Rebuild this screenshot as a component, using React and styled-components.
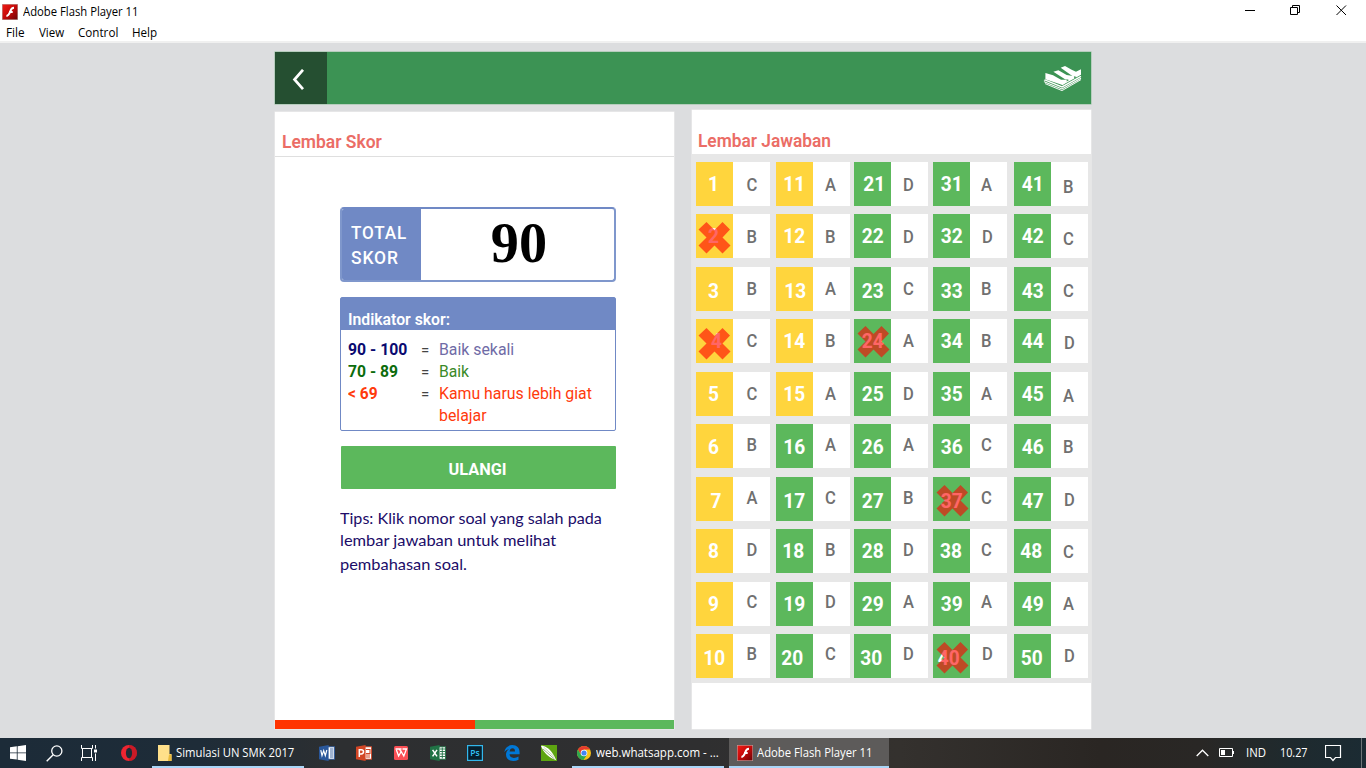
import React from "react";
import styled, { createGlobalStyle } from "styled-components";

const ui = `"Open Sans", "Noto Sans", sans-serif`;
const roboto = `Roboto, "Liberation Sans", sans-serif`;

const Global = createGlobalStyle`
  *, *::before, *::after { box-sizing: border-box; }
  body { margin: 0; overflow: hidden; }
  svg { display: block; flex: none; }
`;

const Desktop = styled.div`
  width: 1366px;
  height: 768px;
  display: flex;
  flex-direction: column;
  background: #dcdddf;
`;

const Squeeze = styled.span`
  display: inline-block;
  white-space: pre;
  transform: scaleX(${(p) => p.$x || 1});
  transform-origin: ${(p) => p.$origin || "left"} center;
`;

/* Window chrome */
const WindowTop = styled.header`
  height: 43px;
  background: #fff;
  border-bottom: 2px solid #f0f0f0;
  font: 12px ${ui};
  color: #000;
`;
const TitleBar = styled.div`
  height: 23px;
  display: flex;
  align-items: center;
  padding-left: 2px;
`;
const TitleText = styled.div`
  flex: 1;
  padding-left: 5px;
  line-height: 23px;
`;
const Controls = styled.div`
  display: flex;
  align-self: flex-start;
  padding: 5px 19px 0 0;
  gap: 35px;
`;
const MenuBar = styled.nav`
  height: 18px;
  display: flex;
  padding-left: 6px;
  line-height: 19px;
`;
const MenuItem = styled.span`
  width: ${(p) => p.$w}px;
`;

/* Stage */
const Stage = styled.main`
  width: 816px;
  height: 695px;
  margin-left: 275px;
  padding-top: 9px;
  font-family: ${roboto};
`;
const AppBar = styled.div`
  height: 52px;
  display: flex;
  justify-content: space-between;
  background: #3c9354;
  box-shadow: 0 0 0 0.5px #8fbd9b;
`;
const Back = styled.div`
  width: 52px;
  display: flex;
  padding: 17px 0 0 17px;
  background: #254f31;
`;
const Books = styled.div`
  padding: 13px 9px 0 0;
`;
const Panels = styled.div`
  display: flex;
  justify-content: space-between;
  padding-top: 6px;
`;
const Panel = styled.section`
  width: 399px;
  height: ${(p) => p.$h}px;
  margin-top: ${(p) => p.$top}px;
  display: flex;
  flex-direction: column;
  background: #fff;
  box-shadow: 0 0 0 0.5px #efefef;
`;
const PanelTitle = styled.h2`
  margin: 0;
  height: ${(p) => p.$h}px;
  padding: ${(p) => p.$pt}px 0 0 ${(p) => p.$pl}px;
  border-bottom: 1px solid ${(p) => p.$line};
  font: 600 18px/22px ${roboto};
  color: #eb6d66;
`;
const ScoreBody = styled.div`
  flex: 1;
  padding: 50px 58px 0 65px;
`;
const TotalBox = styled.div`
  height: 75px;
  display: flex;
  border: 2px solid #7f97cc;
  border-top-color: #7089c5;
  border-radius: 4px;
  overflow: hidden;
`;
const TotalLabel = styled.div`
  width: 79px;
  padding: 11px 0 0 8.5px;
  background: #7089c5;
  color: #fff;
  font: 500 18px/25px ${roboto};
  letter-spacing: 0.9px;
`;
const TotalValue = styled.div`
  flex: 1;
  padding-left: 3px;
  text-align: center;
  font: bold 58px/67px "Liberation Serif", serif;
  color: #000;
`;
const Indicator = styled.div`
  height: 134px;
  margin-top: 15px;
  border: 1.5px solid #7089c5;
  border-radius: 2px;
`;
const IndicatorHead = styled.div`
  height: 32px;
  padding: 11px 0 0 7px;
  background: #7089c5;
  color: #fff;
  font: 600 16px/22px ${roboto};
`;
const Legend = styled.div`
  display: grid;
  grid-template-columns: 73px 17.5px auto;
  padding: 9px 0 0 7px;
  font: 16px/22px ${roboto};
`;
const Range = styled.span`
  font-weight: 700;
  color: ${(p) => p.$c};
`;
const Equals = styled.span`
  color: #444;
  font-size: 15px;
`;
const Meaning = styled.span`
  color: ${(p) => p.$c};
`;
const Retry = styled.div`
  height: 43px;
  margin: 15px 0 0 1px;
  padding-right: 3px;
  border-radius: 1px;
  background: #5cb85c;
  color: #fff;
  text-align: center;
  font: 700 16px/47px ${roboto};
`;
const Tips = styled.p`
  margin: 18px 0 0;
  font: 16px/22px Lato, sans-serif;
  color: #200c68;
`;
const TipLine = styled.span`
  display: block;
  height: ${(p) => p.$h}px;
`;
const Progress = styled.div`
  height: 9px;
  display: flex;
  background: #5cb85c;
`;
const ProgressRed = styled.div`
  width: 200px;
  background: #ff3300;
`;

/* Answer sheet */
const Sheet = styled.div`
  height: 529px;
  display: grid;
  grid-template-columns: 80px 78px 79px 81px 74px;
  align-content: start;
  padding: 7.9px 0 0 4px;
  background: #e7e7e7;
`;
const Column = styled.div`
  width: 74px;
  display: flex;
  flex-direction: column;
  gap: 8.5px;
`;
const Entry = styled.div`
  height: 44px;
  display: flex;
  background: #fff;
`;
const NumberTile = styled.div`
  position: relative;
  width: 37px;
  height: 44px;
  background: ${(p) => (p.$yellow ? "#ffd53d" : "#5cb85c")};
  color: #fff;
  text-align: center;
  font: 700 19.5px/44px ${roboto};
`;
const Answer = styled.div`
  width: 37px;
  color: #707070;
  text-align: center;
  font: 500 18px/44px ${roboto};
`;
const Nudge = styled.span`
  display: inline-block;
  transform: translate(${(p) => p.$dx}px, ${(p) => p.$dy}px) scaleX(${(p) => p.$sx});
`;
const Cross = styled.svg`
  position: absolute;
  left: ${(p) => p.$left}px;
  top: ${(p) => p.$top}px;
`;

/* Taskbar */
const Taskbar = styled.footer`
  height: 30px;
  display: flex;
  background: linear-gradient(90deg, #1c2b38 0, #1e2c38 200px, #2d2f31 340px, #2f2f30 700px, #34312e 900px, #2a2623 1100px, #292725 1200px, #1f2a2e 1290px, #1b2b33 1366px);
  color: #fff;
  font: 12px ${ui};
`;
const Slot = styled.div`
  width: ${(p) => p.$w}px;
  height: 30px;
  padding-right: ${(p) => p.$pr || 0}px;
  display: flex;
  align-items: center;
  justify-content: center;
`;
const Task = styled.div`
  width: ${(p) => p.$w}px;
  height: 30px;
  margin-right: ${(p) => p.$mr || 0}px;
  padding: 1px 0 0 ${(p) => p.$pl}px;
  display: flex;
  align-items: center;
  gap: ${(p) => p.$gap}px;
  background: ${(p) => (p.$active ? "#5d5b5a" : "transparent")};
  border-bottom: 2px solid #a9d6f8;
  line-height: 27px;
`;
const Tray = styled.div`
  flex: 1;
  display: flex;
  align-items: center;
  justify-content: flex-end;
  padding-right: 4px;
`;
const TrayItem = styled.div`
  width: ${(p) => p.$w}px;
  line-height: 28px;
`;
const ShowDesktop = styled.div`
  width: 1px;
  height: 30px;
  background: #6d7578;
`;

const FlashIcon = ({ size }) => (
  <svg width={size} height={size} viewBox="0 0 16 16">
    <defs>
      <linearGradient id="flash" x1="0" y1="0" x2="1" y2="1">
        <stop offset="0" stopColor="#f01a14" />
        <stop offset=".5" stopColor="#c40a0a" />
        <stop offset="1" stopColor="#6d0204" />
      </linearGradient>
    </defs>
    <rect width="16" height="16" fill="#b9a3a0" />
    <rect x=".6" y=".6" width="14.8" height="14.8" fill="url(#flash)" />
    <path d="M12 3.800C9.200 3.800 8.700 6 8 8 7.200 10.300 6.500 11.800 4.400 11.900M7 8h3.700" fill="none" stroke="#fff" strokeWidth="2" />
  </svg>
);

const BooksIcon = () => (
  <svg width="39.4" height="27.6" viewBox="70 195 118 83">
    <g fill="#fff">
      <path d="M123 203 136 198 156 209 169 215 184 208 184 222 168 231 158 228Z" />
      <path d="M101 215 116 211 141 225 160 228 165 233 148 241 136 238Z" />
      <path d="M77 219 100 226 124 239 140 239 143 245 128 255 77 238Z" />
      <path d="M140 240 184 216 184 224 127 256 126 250Z" />
    </g>
    <g fill="none" stroke="#fff" strokeWidth="4">
      <path d="M74 239 74 247" strokeWidth="2" />
      <path d="M75 240 127 261 184 229" />
      <path d="M75 246 127 267 184 235" strokeWidth="3.400" />
      <path d="M76 251 127 272 184 239" strokeWidth="2.800" />
    </g>
    <path d="M141 238l7 2-7 5zM163 229l8 2-7 5z" fill="#3c9354" />
  </svg>
);

const TileIcon = ({ color, page, children }) => (
  <svg width="16" height="16" viewBox="0 0 16 16">
    {page && <rect x="8" y="1.800" width="7.500" height="12.400" fill="#fff" stroke={color} strokeWidth=".9" />}
    {children}
  </svg>
);

const WordIcon = () => (
  <TileIcon color="#2a579a" page>
    <path d="M11 4h3.500M11 6h3.500M11 8h3.500M11 10h3.500M11 12h3.500" stroke="#2a579a" strokeWidth=".9" />
    <path d="M0 1.800 9.600 0v16L0 14.200z" fill="#2a579a" />
    <path d="M1.800 5.200 3 10.600 4.700 5.600 6.300 10.600 7.800 5" fill="none" stroke="#fff" strokeWidth="1.200" />
  </TileIcon>
);
const PowerPointIcon = () => (
  <TileIcon color="#d24625" page>
    <path d="M10 4.500h4v4h-4M10 10h4M10 12h4" fill="none" stroke="#d24625" strokeWidth="1.100" />
    <path d="M0 1.800 9.600 0v16L0 14.200z" fill="#d24625" />
    <path d="M3.300 12V4.700h2q2.200 0 2.200 2T5.200 8.900H3.400" fill="none" stroke="#fff" strokeWidth="1.500" />
  </TileIcon>
);
const WpsIcon = () => (
  <svg width="14" height="14" viewBox="0 0 14 14">
    <rect width="14" height="14" rx="1.500" fill="#f94f55" />
    <path d="M1.500 3h6M8.500 3h4L9.800 10 7.200 5.500 4.600 10 2.400 4M5.500 3.500 7.400 6.200" fill="none" stroke="#fff" strokeWidth="1.300" />
  </svg>
);
const ExcelIcon = () => (
  <TileIcon color="#207245" page>
    <path d="M10 4h5M10 6.500h5M10 9h5M10 11.500h5M12.300 2.500v11" stroke="#207245" strokeWidth=".9" />
    <path d="M0 1.800 9.600 0v16L0 14.200z" fill="#207245" />
    <path d="M2.600 4.800 7 11.400M7 4.800 2.600 11.400" stroke="#fff" strokeWidth="1.500" />
  </TileIcon>
);
const PhotoshopIcon = () => (
  <svg width="16" height="16" viewBox="0 0 16 16">
    <rect x=".6" y=".6" width="14.800" height="14.800" fill="#071e2c" stroke="#32b7ec" strokeWidth="1.200" />
    <text x="3.200" y="11.300" fontSize="8.500" fontWeight="600" fontFamily="Open Sans, sans-serif" fill="#32c3f8">Ps</text>
  </svg>
);
const EdgeIcon = () => (
  <svg width="16" height="16" viewBox="0 0 16 16">
    <path d="M.3 7.2C1 2.7 4 .1 8.3.1c4.600 0 7.300 3 7.300 7.300v1.900H5.500c.1 2.300 1.800 3.600 4.400 3.600 1.700 0 3.200-.5 4.600-1.300v3.200c-1.500.8-3.300 1.200-5.300 1.200-4.500 0-7.200-2.500-7.200-6.400 0-2.500 1.200-4.500 3.300-5.700C3.500 4.300 1.600 5.400.3 7.200zM5.600 6.400h5.400c0-2-.8-3.100-2.500-3.100-1.600 0-2.600 1.200-2.900 3.100z" fill="#0078d7" />
  </svg>
);
const CorelIcon = () => (
  <svg width="16" height="16" viewBox="0 0 16 16">
    <rect width="16" height="16" fill="#5da511" />
    <path d="M0 1C1 .6 2.500 .8 4 1.500 8.500 3.500 13 9 15.200 15.200 9 13 3.500 8.500 1.500 4 .8 2.600 .4 1.600 0 1z" fill="#fff" />
    <path d="M2.500 2 13.500 12" stroke="#a4cb7c" strokeWidth=".6" />
    <path d="M2 4 13.500 14" stroke="#6d8f50" strokeWidth=".7" />
  </svg>
);
const ChromeIcon = () => (
  <svg width="14" height="14" viewBox="0 0 14 14">
    <circle cx="7" cy="7" r="7" fill="#fbc116" />
    <path d="M.94 3.500A7 7 0 0 1 13.060 3.500H7L4 8.700z" fill="#e53b2e" />
    <path d="M.94 3.500A7 7 0 0 0 6.500 14L10 8.700H4z" fill="#2da94f" />
    <circle cx="7" cy="7" r="3.300" fill="#fff" />
    <circle cx="7" cy="7" r="2.600" fill="#4486f5" />
  </svg>
);

const ANSWERS = ["CBBCCBADCB", "ABABAACBDC", "DDCADABDAD", "ADBBACCCAD", "BCCDABDCAD"];
const WRONG = {
  2: { left: 1.5, top: 6.7 },
  4: { left: 1.5, top: 7.7 },
  24: { left: 2.5, top: 5.3 },
  37: { left: 3, top: 7.2 },
  40: { left: 3, top: 6.4 },
};
const ROW_DY = [1, 0.5, 2.5, 1.4, 1.4, 2, 3, 1, 1, 3];
const COLUMN_DX = [-1, 0, 0.5, 0.5, 0.5];
const NUMBER_DX = { 4: 3, 7: 2.5, 10: 1, 11: 0, 13: 1, 18: -1, 20: -2, 21: 1.5, 30: -1.5, 38: -0.8, 40: -3, 48: -1.5, 50: -1 };
const LETTER_DX = [0, -1.5, -1.5, -2.5, -1.5];

const AnswerColumn = ({ col }) => (
  <Column>
    {ANSWERS[col].split("").map((letter, row) => {
      const n = col * 10 + row + 1;
      const dLetter = letter === "D" && col > 2 ? 1 : 0;
      return (
        <Entry key={n}>
          <NumberTile $yellow={n <= 15}>
            <Nudge $dx={COLUMN_DX[col] + (NUMBER_DX[n] || 0)} $dy={ROW_DY[row]} $sx={0.98}>{n}</Nudge>
            {WRONG[n] && (
              <Cross $left={WRONG[n].left} $top={WRONG[n].top} width="33" height="33" viewBox="0 0 33 33">
                <path d="M8.500 1 16.500 9 24.500 1 32 8.500 24.500 16.500 32.500 24.500 24.500 32.500 16.500 24.500 8.500 32.500 .5 24.500 8.500 16.500 .5 8.500z" fill="rgba(255,0,0,.6)" />
              </Cross>
            )}
          </NumberTile>
          <Answer>
            <Nudge $dx={LETTER_DX[col] + dLetter} $dy={(col === 4 ? 3 : 1) - row * 0.35} $sx={0.92}>{letter}</Nudge>
          </Answer>
        </Entry>
      );
    })}
  </Column>
);

export default function App() {
  return (
    <Desktop>
      <Global />
      <WindowTop>
        <TitleBar>
          <FlashIcon size={16} />
          <TitleText><Squeeze $x={0.94}>Adobe Flash Player 11</Squeeze></TitleText>
          <Controls>
            <svg width="11" height="11"><path d="M1 5.500h10" stroke="#000" /></svg>
            <svg width="11" height="11"><path d="M.5 2.500h7v7h-7zM2.500 2.500v-2h7v7h-2" fill="none" stroke="#000" /></svg>
            <svg width="11" height="11"><path d="M.5.5l9.500 9.500M10 .5.5 10" stroke="#000" /></svg>
          </Controls>
        </TitleBar>
        <MenuBar>
          <MenuItem $w={33}><Squeeze $x={0.98}>File</Squeeze></MenuItem>
          <MenuItem $w={39}><Squeeze $x={0.96}>View</Squeeze></MenuItem>
          <MenuItem $w={54}><Squeeze $x={0.97}>Control</Squeeze></MenuItem>
          <MenuItem $w={40}><Squeeze $x={0.97}>Help</Squeeze></MenuItem>
        </MenuBar>
      </WindowTop>

      <Stage>
        <AppBar>
          <Back>
            <svg width="13" height="22" viewBox="0 0 13 22"><path d="M11 .8 2.500 10.500 11 20.200" fill="none" stroke="#fff" strokeWidth="2.700" /></svg>
          </Back>
          <Books><BooksIcon /></Books>
        </AppBar>

        <Panels>
          <Panel $h={617} $top={2}>
            <PanelTitle $h={45} $pt={19} $pl={7} $line="#dfdfdf"><Squeeze $x={0.97}>Lembar Skor</Squeeze></PanelTitle>
            <ScoreBody>
              <TotalBox>
                <TotalLabel>
                  <Squeeze $x={0.95}>TOTAL</Squeeze>
                  <br />
                  <Squeeze $x={0.97}>SKOR</Squeeze>
                </TotalLabel>
                <TotalValue><Squeeze $x={0.97} $origin="center">90</Squeeze></TotalValue>
              </TotalBox>
              <Indicator>
                <IndicatorHead><Squeeze $x={0.985}>Indikator skor:</Squeeze></IndicatorHead>
                <Legend>
                  <Range $c="#0a0a70"><Squeeze $x={0.985}>90 - 100</Squeeze></Range>
                  <Equals>=</Equals>
                  <Meaning $c="#6f6ba6"><Squeeze $x={0.99}>Baik sekali</Squeeze></Meaning>
                  <Range $c="#0c6c0c"><Squeeze $x={0.98}>70 - 89</Squeeze></Range>
                  <Equals>=</Equals>
                  <Meaning $c="#3a8a28"><Squeeze $x={0.98}>Baik</Squeeze></Meaning>
                  <Range $c="#ff3a0c"><Squeeze $x={0.97}>{"< 69"}</Squeeze></Range>
                  <Equals>=</Equals>
                  <Meaning $c="#ff3a0c">
                    <Squeeze $x={0.99}>{"Kamu harus lebih giat\nbelajar"}</Squeeze>
                  </Meaning>
                </Legend>
              </Indicator>
              <Retry><Squeeze $x={1.02} $origin="center">ULANGI</Squeeze></Retry>
              <Tips>
                <TipLine $h={22}><Squeeze $x={1.008}>Tips: Klik nomor soal yang salah pada </Squeeze></TipLine>
                <TipLine $h={24}><Squeeze $x={1.028}>lembar jawaban untuk melihat </Squeeze></TipLine>
                <TipLine $h={22}><Squeeze $x={1.025}>pembahasan soal.</Squeeze></TipLine>
              </Tips>
            </ScoreBody>
            <Progress><ProgressRed /></Progress>
          </Panel>

          <Panel $h={619} $top={0}>
            <PanelTitle $h={44} $pt={20} $pl={6} $line="#fff"><Squeeze $x={0.962}>Lembar Jawaban</Squeeze></PanelTitle>
            <Sheet>
              {ANSWERS.map((_, col) => <AnswerColumn key={col} col={col} />)}
            </Sheet>
          </Panel>
        </Panels>
      </Stage>

      <Taskbar>
        <Slot $w={36}>
          <svg width="16" height="16" viewBox="0 0 16 16"><path d="M0 2.300 6.800 1.300v6.200H0zM7.600 1.200 16 0v7.500H7.600zM0 8.300h6.800v6.300L0 13.700zM7.600 8.300H16V16l-8.400-1.200z" fill="#fff" /></svg>
        </Slot>
        <Slot $w={36}>
          <svg width="17" height="17" viewBox="0 0 17 17"><circle cx="10.800" cy="6" r="5.100" fill="none" stroke="#fff" strokeWidth="1.300" /><path d="M7.200 9.800.7 16.200" stroke="#fff" strokeWidth="1.400" /></svg>
        </Slot>
        <Slot $w={36}>
          <svg width="18" height="16" viewBox="0 0 18 16"><path d="M.5 0v3.500h11V0M.5 16v-3.500h11V16M1.500 4v8M10.500 4v8M14.500 0v3.500M14.500 8.500V16" fill="none" stroke="#fff" strokeWidth="1" /><path d="M13 4.500h3v3h-3z" fill="#fff" /></svg>
        </Slot>
        <Slot $w={44} $pr={2}>
          <svg width="16" height="16" viewBox="0 0 16 16"><ellipse cx="8" cy="8" rx="8" ry="8" fill="#ee2531" /><path d="M8 0a8 8 0 0 1 0 16z" fill="#a9101c" opacity=".5" /><ellipse cx="8" cy="8" rx="3.100" ry="5.300" fill="#1f2c37" /></svg>
        </Slot>
        <Task $w={152} $pl={6} $gap={4} $mr={6}>
          <svg width="14" height="16" viewBox="0 0 14 16"><path d="M0 0h11.500v9H13.500V16H0z" fill="#ffe08a" /><path d="M11 9.500h2.500V16H10z" fill="#e9b93c" /></svg>
          <Squeeze $x={0.94}>Simulasi UN SMK 2017</Squeeze>
        </Task>
        <Slot $w={34}><WordIcon /></Slot>
        <Slot $w={40}><PowerPointIcon /></Slot>
        <Slot $w={34}><WpsIcon /></Slot>
        <Slot $w={40}><ExcelIcon /></Slot>
        <Slot $w={34}><PhotoshopIcon /></Slot>
        <Slot $w={40}><EdgeIcon /></Slot>
        <Slot $w={40} $pr={6}><CorelIcon /></Slot>
        <Task $w={152} $pl={5} $gap={5} $mr={5}>
          <ChromeIcon />
          <Squeeze $x={0.96}>web.whatsapp.com - ...</Squeeze>
        </Task>
        <Task $w={160} $pl={8} $gap={4} $active>
          <FlashIcon size={16} />
          <Squeeze $x={0.94}>Adobe Flash Player 11</Squeeze>
        </Task>
        <Tray>
          <TrayItem $w={23}><svg width="13" height="8" viewBox="0 0 13 8"><path d="M.7 7 6.500 1.200 12.300 7" fill="none" stroke="#fff" strokeWidth="1.300" /></svg></TrayItem>
          <TrayItem $w={27}><svg width="16" height="10" viewBox="0 0 16 10"><path d="M.5.5h13v8H.5zM14.500 3v3" fill="none" stroke="#fff" /><path d="M2 2h4v5H2z" fill="#fff" /></svg></TrayItem>
          <TrayItem $w={34}><Squeeze $x={0.95}>IND</Squeeze></TrayItem>
          <TrayItem $w={45}><Squeeze $x={0.9}>10.27</Squeeze></TrayItem>
          <TrayItem $w={36}><svg width="17" height="17" viewBox="0 0 17 17"><path d="M.5.5h15v12h-5l-2.500 3-2.500-3h-5z" fill="none" stroke="#fff" strokeWidth="1.200" /></svg></TrayItem>
          <ShowDesktop />
        </Tray>
      </Taskbar>
    </Desktop>
  );
}
